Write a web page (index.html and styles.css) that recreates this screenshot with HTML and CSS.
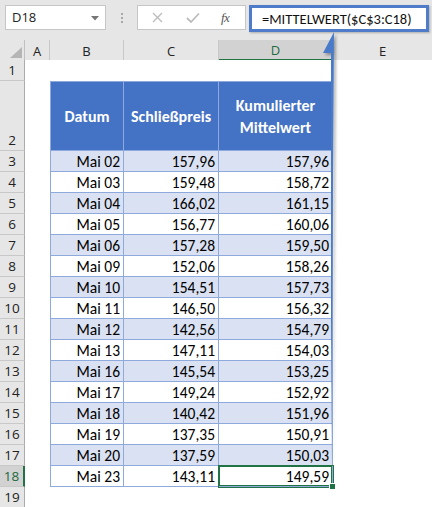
FILE: index.html
```html
<!DOCTYPE html>
<html>
<head>
<meta charset="utf-8">
<link rel="stylesheet" href="styles.css">
</head>
<body>
<div class="app">
  <div class="toolbar">
    <div class="namebox">
      <span class="nb-text">D18</span>
      <svg class="caret" width="8" height="5" viewBox="0 0 8 5"><polygon points="0,0 8,0 4,4.5" fill="#777"/></svg>
    </div>
    <div class="dots"><i></i><i></i><i></i></div>
    <div class="fbuttons">
      <svg class="btn-x" width="11" height="11" viewBox="0 0 11 11"><path d="M1 1 L10 10 M10 1 L1 10" stroke="#bdbdbd" stroke-width="1.4" fill="none"/></svg>
      <svg class="btn-ok" width="14" height="11" viewBox="0 0 14 11"><path d="M1 6 L5 10 L13 1.5" stroke="#bdbdbd" stroke-width="1.8" fill="none"/></svg>
      <span class="fx">fx</span>
    </div>
    <div class="formula">=MITTELWERT($C$3:C18)</div>
  </div>

  <div class="sheet">
    <div class="row colheads">
      <div class="corner"><svg width="12" height="11" viewBox="0 0 12 11"><polygon points="12,0 12,11 0,11" fill="#b5b5b5"/></svg></div>
      <div class="ch">A</div>
      <div class="ch">B</div>
      <div class="ch">C</div>
      <div class="ch sel">D</div>
      <div class="ch last">E</div>
    </div>
    <div class="row r21"><div class="rh">1</div><div class="c"></div><div class="c"></div><div class="c"></div><div class="c"></div><div class="c"></div></div>
    <div class="row r70"><div class="rh">2</div><div class="c"></div><div class="th first">Datum</div><div class="th">Schließpreis</div><div class="th">Kumulierter<br>Mittelwert</div><div class="c"></div></div>
    <div class="row r21 band"><div class="rh">3</div><div class="c"></div><div class="t first">Mai 02</div><div class="t">157,96</div><div class="t">157,96</div><div class="c"></div></div>
    <div class="row r21"><div class="rh">4</div><div class="c"></div><div class="t first">Mai 03</div><div class="t">159,48</div><div class="t">158,72</div><div class="c"></div></div>
    <div class="row r21 band"><div class="rh">5</div><div class="c"></div><div class="t first">Mai 04</div><div class="t">166,02</div><div class="t">161,15</div><div class="c"></div></div>
    <div class="row r21"><div class="rh">6</div><div class="c"></div><div class="t first">Mai 05</div><div class="t">156,77</div><div class="t">160,06</div><div class="c"></div></div>
    <div class="row r21 band"><div class="rh">7</div><div class="c"></div><div class="t first">Mai 06</div><div class="t">157,28</div><div class="t">159,50</div><div class="c"></div></div>
    <div class="row r21"><div class="rh">8</div><div class="c"></div><div class="t first">Mai 09</div><div class="t">152,06</div><div class="t">158,26</div><div class="c"></div></div>
    <div class="row r21 band"><div class="rh">9</div><div class="c"></div><div class="t first">Mai 10</div><div class="t">154,51</div><div class="t">157,73</div><div class="c"></div></div>
    <div class="row r21"><div class="rh">10</div><div class="c"></div><div class="t first">Mai 11</div><div class="t">146,50</div><div class="t">156,32</div><div class="c"></div></div>
    <div class="row r21 band"><div class="rh">11</div><div class="c"></div><div class="t first">Mai 12</div><div class="t">142,56</div><div class="t">154,79</div><div class="c"></div></div>
    <div class="row r21"><div class="rh">12</div><div class="c"></div><div class="t first">Mai 13</div><div class="t">147,11</div><div class="t">154,03</div><div class="c"></div></div>
    <div class="row r21 band"><div class="rh">13</div><div class="c"></div><div class="t first">Mai 16</div><div class="t">145,54</div><div class="t">153,25</div><div class="c"></div></div>
    <div class="row r21"><div class="rh">14</div><div class="c"></div><div class="t first">Mai 17</div><div class="t">149,24</div><div class="t">152,92</div><div class="c"></div></div>
    <div class="row r21 band"><div class="rh">15</div><div class="c"></div><div class="t first">Mai 18</div><div class="t">140,42</div><div class="t">151,96</div><div class="c"></div></div>
    <div class="row r21"><div class="rh">16</div><div class="c"></div><div class="t first">Mai 19</div><div class="t">137,35</div><div class="t">150,91</div><div class="c"></div></div>
    <div class="row r21 band"><div class="rh">17</div><div class="c"></div><div class="t first">Mai 20</div><div class="t">137,59</div><div class="t">150,03</div><div class="c"></div></div>
    <div class="row r21"><div class="rh rsel">18</div><div class="c"></div><div class="t first">Mai 23</div><div class="t">143,11</div><div class="t active">149,59<span class="handle"></span></div><div class="c"></div></div>
    <div class="row r21"><div class="rh">19</div><div class="c"></div><div class="c"></div><div class="c"></div><div class="c"></div><div class="c"></div></div>
  </div>

  <svg class="arrow" width="30" height="445" viewBox="0 0 30 445">
    <polygon points="12,0 1,21 9,21 9,432 Q9,436 13,436 Q17,436 17,432 L17,21 23,21" fill="#4a7bcb"/>
  </svg>
</div>
</body>
</html>
```

FILE: styles.css
```css
html, body {
  margin: 0;
  padding: 0;
  background: #ffffff;
}
.app {
  position: relative;
  width: 432px;
  height: 507px;
  overflow: hidden;
  font-family: Carlito, Calibri, Lato, "Liberation Sans", sans-serif;
}
.toolbar {
  height: 40px;
  background: #e6e6e6;
  display: flex;
  align-items: flex-start;
  padding-top: 5px;
  box-sizing: border-box;
}
.namebox {
  margin-left: 5px;
  width: 101px;
  height: 25px;
  box-sizing: border-box;
  background: #fff;
  border: 1px solid #c6c6c6;
  display: flex;
  align-items: center;
  justify-content: space-between;
  padding: 0 6px 0 6px;
  font-family: "Segoe UI", "Open Sans", "Noto Sans", sans-serif;
  font-size: 13px;
  color: #222;
}
.nb-text {
  margin-top: -1px;
}
.caret {
  margin-top: 1px;
}
.dots {
  width: 31px;
  height: 25px;
  display: flex;
  flex-direction: column;
  align-items: center;
  justify-content: center;
  gap: 2px;
}
.dots i {
  display: block;
  width: 2px;
  height: 2px;
  background: #a8a8a8;
}
.fbuttons {
  width: 109px;
  height: 25px;
  box-sizing: border-box;
  background: #fff;
  border: 1px solid #c6c6c6;
  display: flex;
  align-items: center;
  position: relative;
}
.btn-x {
  margin-left: 14px;
}
.btn-ok {
  margin-left: 23px;
}
.fx {
  margin-left: 21px;
  font-family: "Liberation Serif", "DejaVu Serif", serif;
  font-style: italic;
  font-size: 13px;
  color: #555;
  letter-spacing: -0.5px;
}
.formula {
  margin-left: 3px;
  width: 180px;
  height: 27px;
  box-sizing: border-box;
  background: #fff;
  border: 3px solid #4f7cc9;
  box-shadow: 1px 1px 2px rgba(0,0,0,0.25);
  padding-left: 10px;
  display: flex;
  align-items: center;
  font-size: 14.5px;
  color: #111;
}

.sheet {
  display: flex;
  flex-direction: column;
}
.row {
  display: grid;
  grid-template-columns: 25px 25px 74px 95px 114px 99px;
  box-sizing: border-box;
}
.r21 { height: 21px; }
.r70 { height: 70px; }
.colheads {
  height: 20px;
  background: #e6e6e6;
}
.corner {
  border-right: 1px solid #c0c0c0;
  border-bottom: 1px solid #ababab;
  display: flex;
  align-items: flex-end;
  justify-content: flex-end;
  padding: 0 2px 2px 0;
  box-sizing: border-box;
}
.ch {
  border-right: 1px solid #c8c8c8;
  border-bottom: 1px solid #ababab;
  box-sizing: border-box;
  display: flex;
  align-items: center;
  justify-content: center;
  font-family: "Segoe UI", "Open Sans", "Noto Sans", sans-serif;
  font-size: 13px;
  color: #222;
  padding-top: 1px;
}
.ch.last { border-right: none; }
.ch.sel {
  background: #d2d2d2;
  border-bottom: 2px solid #217346;
  color: #1e6b3f;
}
.rh {
  background: #e6e6e6;
  border-right: 1px solid #ababab;
  border-bottom: 1px solid #c8c8c8;
  box-sizing: border-box;
  display: flex;
  align-items: flex-end;
  justify-content: center;
  font-family: "Segoe UI", "Open Sans", "Noto Sans", sans-serif;
  font-size: 13.5px;
  color: #222;
  padding-bottom: 1px;
}
.rh.rsel {
  background: #d2d2d2;
  border-right: 2px solid #217346;
  color: #1e6b3f;
}
.c {
  background: #fff;
}
.th {
  background: #4472c4;
  color: #fff;
  font-weight: bold;
  font-size: 16px;
  line-height: 22px;
  text-align: center;
  display: flex;
  align-items: center;
  justify-content: center;
  border-right: 1px solid #8eaadc;
  border-top: 1px solid #8eaadc;
  border-bottom: 1px solid #8eaadc;
  box-sizing: border-box;
  padding-top: 1px;
}
.th.first {
  border-left: 1px solid #8eaadc;
}
.t {
  background: #fff;
  border-right: 1px solid #8eaadc;
  border-bottom: 1px solid #8eaadc;
  box-sizing: border-box;
  display: flex;
  align-items: center;
  justify-content: flex-end;
  padding-right: 3px;
  font-size: 15.5px;
  color: #000;
  position: relative;
}
.t.first {
  border-left: 1px solid #8eaadc;
}
.band .t {
  background: #d9e1f2;
}
.t.active {
  box-shadow: 0 0 0 1px #217346, inset 0 0 0 1px #217346;
}
.handle {
  position: absolute;
  right: -4px;
  bottom: -4px;
  width: 5px;
  height: 5px;
  background: #217346;
  border: 1px solid #fff;
}
.arrow {
  position: absolute;
  left: 322px;
  top: 32px;
  filter: drop-shadow(2px 2px 1.5px rgba(0,0,0,0.35));
}
```
